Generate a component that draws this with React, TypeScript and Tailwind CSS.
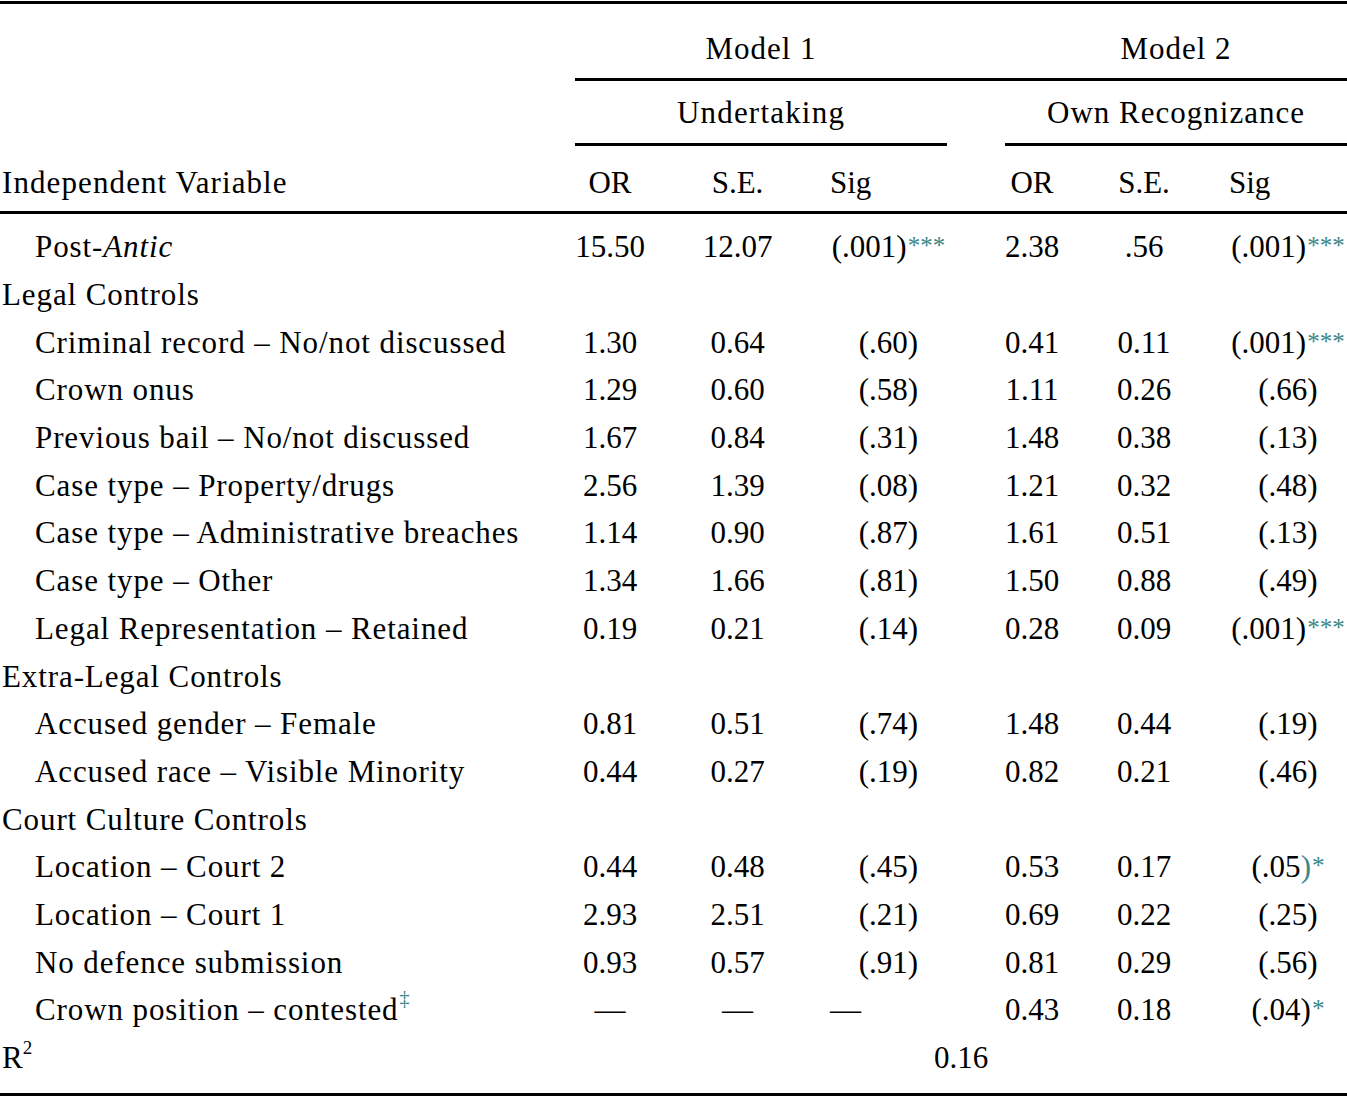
import type { ReactNode } from "react";

const COLS = "grid grid-cols-[575px_70px_185px_117px_58px_54px_170px_118px]";

function Stars({ n }: { n: string }) {
  return (
    <span className="relative top-[-3px] ml-[1px] text-[25px] text-[#3b8787]">
      {n}
    </span>
  );
}

function Sig({ v, stars, tealParen }: { v: string; stars?: string; tealParen?: boolean }) {
  if (tealParen) {
    return (
      <span>
        {v.slice(0, -1)}
        <span className="text-[#3b8787]">)</span>
        {stars && <Stars n={stars} />}
      </span>
    );
  }
  return (
    <span>
      {v}
      {stars && <Stars n={stars} />}
    </span>
  );
}

type Row =
  | { kind: "section"; label: string }
  | { kind: "item"; label: ReactNode; cells: ReactNode[]; dashRow?: boolean };

const rows: Row[] = [
  {
    kind: "item",
    label: (
      <>
        Post-<i>Antic</i>
      </>
    ),
    cells: ["15.50", "12.07", <Sig v="(.001)" stars="***" />, "2.38", ".56", <Sig v="(.001)" stars="***" />],
  },
  { kind: "section", label: "Legal Controls" },
  {
    kind: "item",
    label: "Criminal record – No/not discussed",
    cells: ["1.30", "0.64", "(.60)", "0.41", "0.11", <Sig v="(.001)" stars="***" />],
  },
  { kind: "item", label: "Crown onus", cells: ["1.29", "0.60", "(.58)", "1.11", "0.26", "(.66)"] },
  { kind: "item", label: "Previous bail – No/not discussed", cells: ["1.67", "0.84", "(.31)", "1.48", "0.38", "(.13)"] },
  { kind: "item", label: "Case type – Property/drugs", cells: ["2.56", "1.39", "(.08)", "1.21", "0.32", "(.48)"] },
  { kind: "item", label: "Case type – Administrative breaches", cells: ["1.14", "0.90", "(.87)", "1.61", "0.51", "(.13)"] },
  { kind: "item", label: "Case type – Other", cells: ["1.34", "1.66", "(.81)", "1.50", "0.88", "(.49)"] },
  {
    kind: "item",
    label: "Legal Representation – Retained",
    cells: ["0.19", "0.21", "(.14)", "0.28", "0.09", <Sig v="(.001)" stars="***" />],
  },
  { kind: "section", label: "Extra-Legal Controls" },
  { kind: "item", label: "Accused gender – Female", cells: ["0.81", "0.51", "(.74)", "1.48", "0.44", "(.19)"] },
  { kind: "item", label: "Accused race – Visible Minority", cells: ["0.44", "0.27", "(.19)", "0.82", "0.21", "(.46)"] },
  { kind: "section", label: "Court Culture Controls" },
  {
    kind: "item",
    label: "Location – Court 2",
    cells: ["0.44", "0.48", "(.45)", "0.53", "0.17", <Sig v="(.05)" stars="*" tealParen />],
  },
  { kind: "item", label: "Location – Court 1", cells: ["2.93", "2.51", "(.21)", "0.69", "0.22", "(.25)"] },
  { kind: "item", label: "No defence submission", cells: ["0.93", "0.57", "(.91)", "0.81", "0.29", "(.56)"] },
  {
    kind: "item",
    label: (
      <>
        Crown position – contested
        <span className="relative top-[-12px] ml-[1px] text-[20px] text-[#3b8787]">‡</span>
      </>
    ),
    cells: ["—", "—", "—", "0.43", "0.18", <Sig v="(.04)" stars="*" />],
    dashRow: true,
  },
];

export default function App() {
  return (
    <div className="w-[1347px] h-[1099px] bg-white text-black font-['Liberation_Serif',serif] text-[31px] leading-none">
      <div className="h-[1px]" />
      <div className="h-[3px] bg-black" />

      {/* Model row */}
      <div className={`${COLS} h-[77px]`}>
        <div />
        <div className="col-span-3 flex items-center justify-center pt-[14px] tracking-[1px] border-b-[3px] border-black">
          Model 1
        </div>
        <div className="border-b-[3px] border-black" />
        <div className="col-span-3 flex items-center justify-center pt-[14px] tracking-[1px] border-b-[3px] border-black">
          Model 2
        </div>
      </div>

      {/* Outcome row */}
      <div className={`${COLS} h-[65px]`}>
        <div />
        <div className="col-span-3 flex items-center justify-center tracking-[1.2px] border-b-[3px] border-black">
          Undertaking
        </div>
        <div />
        <div className="col-span-3 flex items-center justify-center tracking-[1px] border-b-[3px] border-black">
          Own Recognizance
        </div>
      </div>

      {/* Column headers */}
      <div className={`${COLS} h-[68px] border-b-[3px] border-black`}>
        <div className="flex items-center pl-[2px] pt-[8px] tracking-[1.1px]">Independent Variable</div>
        <div className="flex items-center justify-center pt-[8px]">OR</div>
        <div className="flex items-center justify-center pt-[8px]">S.E.</div>
        <div className="flex items-center pt-[8px]">Sig</div>
        <div />
        <div className="flex items-center justify-center pt-[8px]">OR</div>
        <div className="flex items-center justify-center pt-[8px]">S.E.</div>
        <div className="flex items-center pt-[8px]">Sig</div>
      </div>

      {/* Body */}
      <div className="pt-[9px]">
        {rows.map((r, i) =>
          r.kind === "section" ? (
            <div key={i} className="h-[47.7px] flex items-center pl-[2px] tracking-[0.9px]">
              {r.label}
            </div>
          ) : (
            <div key={i} className={`${COLS} h-[47.7px]`}>
              <div className="flex items-center pl-[35px] tracking-[0.9px] whitespace-nowrap">{r.label}</div>
              <div className="flex items-center justify-center">{r.cells[0]}</div>
              <div className="flex items-center justify-center">{r.cells[1]}</div>
              <div className={`flex items-center ${r.dashRow ? "justify-start" : "justify-center"}`}>
                {r.cells[2]}
              </div>
              <div />
              <div className="flex items-center justify-center">{r.cells[3]}</div>
              <div className="flex items-center justify-center">{r.cells[4]}</div>
              <div className="flex items-center justify-center">{r.cells[5]}</div>
            </div>
          )
        )}
        <div className={`${COLS} h-[47.7px]`}>
          <div className="flex items-center pl-[2px]">
            R<span className="relative top-[-10px] text-[19px]">2</span>
          </div>
          <div className="col-span-7 flex items-center justify-center">0.16</div>
        </div>
      </div>

      <div className="h-[12px]" />
      <div className="h-[3px] bg-black" />
    </div>
  );
}
